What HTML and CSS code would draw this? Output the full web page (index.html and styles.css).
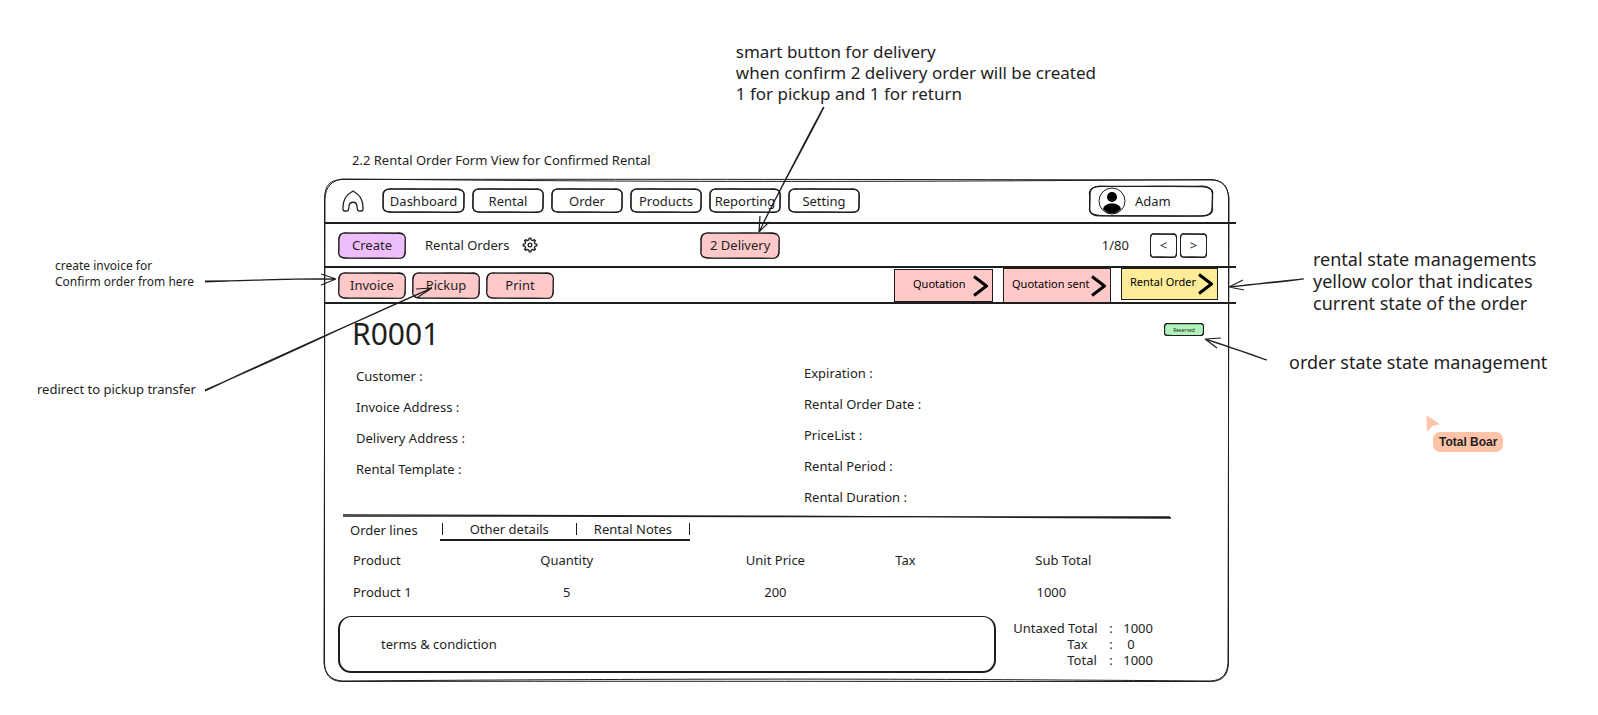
FILE: index.html
```html
<!DOCTYPE html>
<html lang="en">
<head>
<meta charset="utf-8">
<meta name="viewport" content="width=device-width, initial-scale=1">
<title>Rental Order Form View</title>
<link rel="stylesheet" href="styles.css">
</head>
<body>
<svg class="defs" aria-hidden="true">
  <symbol id="rough" viewBox="0 0 72 26" preserveAspectRatio="none">
    <path vector-effect="non-scaling-stroke" d="M7 1.2 C25 .6 48 1.6 65 .8 C69 1 70.8 3 71 6.5 C71.6 11 70.6 16 71.2 20 C71 23.6 69 25 65 25 C46 25.7 25 24.6 7 25.2 C3 25 1.2 23.5 1 20 C.6 15 1.5 11 .8 6.5 C1 2.8 3 1.3 7 1.2Z"/>
    <path class="pass" vector-effect="non-scaling-stroke" d="M7 .8 C28 1.8 46 .6 65 1.4 C68.5 1.6 71.4 3.5 71.3 6.5 C70.7 11 71.4 15 70.8 20 C70.6 23 68.5 25.4 65 25.3 C44 24.7 28 25.6 7 24.8 C3.5 24.6 .8 23 .8 20 C1.4 16 .7 11 1.2 6.5 C1.5 3.5 3.5 1 7 .8Z"/>
  </symbol>
  <symbol id="chevron" viewBox="0 0 16 22"><path d="M2 1.5 14.5 11 2 20.5" fill="none" stroke="#000" stroke-width="3"/></symbol>
</svg>

<main class="canvas">
  <aside class="notes notes-left">
    <p class="note-invoice">create invoice for<br>Confirm order from here</p>
    <p class="note-pickup">redirect to pickup transfer</p>
  </aside>

  <section class="center">
    <p class="note-top">smart button for delivery<br>when confirm 2 delivery order will be created<br>1 for pickup and 1 for return</p>
    <h1 class="caption">2.2 Rental Order Form View for Confirmed Rental</h1>

    <div class="board">
      <svg class="frame" viewBox="0 0 905 503" preserveAspectRatio="none" aria-hidden="true">
        <path d="M18 .5 C250 0 600 .5 887 1 C899 1 904 7 904.5 19 L904.5 484 C904 496 899 502 887 502.5 C600 502.5 250 502 18 502.5 C6 502 1 496 .5 484 L.5 19 C1 6 6 1 18 .5Z"/>
        <path d="M18 0 C250 2 450 4 887 .5 C898 1 904 8 905 19 L904 484 C903 496 898 501 887 502 C600 500 450 499 18 502 C7 501 1 495 0 484 L1 19 C2 8 7 2 18 0"/>
      </svg>

      <header class="row nav-row">
        <svg class="home" viewBox="0 0 22 22" aria-hidden="true"><path d="M3 21 C1 21 .8 20 1 17 C1.5 9 4 5 11 1 C18 5 20.5 9 21 17 C21.2 20 21 21 19 21 C15 21.5 15.5 20 15 16 C14.5 11 7.5 11 7 16 C6.5 20 7 21.5 3 21Z"/></svg>
        <nav class="nav">
          <button class="sketch wide"><svg class="rough"><use href="#rough"/></svg><span>Dashboard</span></button>
          <button class="sketch"><svg class="rough"><use href="#rough"/></svg><span>Rental</span></button>
          <button class="sketch"><svg class="rough"><use href="#rough"/></svg><span>Order</span></button>
          <button class="sketch"><svg class="rough"><use href="#rough"/></svg><span>Products</span></button>
          <button class="sketch"><svg class="rough"><use href="#rough"/></svg><span>Reporting</span></button>
          <button class="sketch"><svg class="rough"><use href="#rough"/></svg><span>Setting</span></button>
        </nav>
        <button class="sketch user"><svg class="rough"><use href="#rough"/></svg>
          <svg class="avatar" viewBox="0 0 28 28" aria-hidden="true"><circle cx="14" cy="14" r="13" fill="#fff" stroke="#1e1e1e"/><circle cx="14" cy="10" r="5"/><path d="M5 22 C6 14.5 22 14.5 23 22 C18 28 10 28 5 22Z"/></svg>
          <span>Adam</span></button>
      </header>

      <div class="row action-row">
        <div class="crumb">
          <button class="sketch action create"><svg class="rough"><use href="#rough"/></svg><span>Create</span></button>
          <span>Rental Orders</span>
          <button class="gear" aria-label="Settings"><svg viewBox="0 0 24 24"><path d="M10.3 4.3 L10.8 1.8 H13.2 L13.7 4.3 L16.2 5.4 L18.4 3.9 L20.1 5.6 L18.6 7.8 L19.7 10.3 L22.2 10.8 V13.2 L19.7 13.7 L18.6 16.2 L20.1 18.4 L18.4 20.1 L16.2 18.6 L13.7 19.7 L13.2 22.2 H10.8 L10.3 19.7 L7.8 18.6 L5.6 20.1 L3.9 18.4 L5.4 16.2 L4.3 13.7 L1.8 13.2 V10.8 L4.3 10.3 L5.4 7.8 L3.9 5.6 L5.6 3.9 L7.8 5.4Z"/><circle cx="12" cy="12" r="2.8"/></svg></button>
        </div>
        <div class="delivery-slot">
          <button class="sketch action pink delivery"><svg class="rough"><use href="#rough"/></svg><span>2 Delivery</span></button>
          <svg class="arrow arrow-delivery" viewBox="0 0 74 130" aria-hidden="true"><path d="M70 2 C50 42 25 85 5 127 M69.500 2 C49 41 25 86 5 127 M5 127 L6 111 M5 127 L15 117"/></svg>
        </div>
        <div class="pager">
          <span>1/80</span>
          <button class="sketch page" aria-label="Previous"><svg class="rough"><use href="#rough"/></svg><span>&lt;</span></button>
          <button class="sketch page" aria-label="Next"><svg class="rough"><use href="#rough"/></svg><span>&gt;</span></button>
        </div>
      </div>

      <div class="row state-row">
        <div class="doc-actions">
          <button class="sketch action pink"><svg class="rough"><use href="#rough"/></svg><span>Invoice</span></button>
          <button class="sketch action pink"><svg class="rough"><use href="#rough"/></svg><span>Pickup</span></button>
          <button class="sketch action pink"><svg class="rough"><use href="#rough"/></svg><span>Print</span></button>
        </div>
        <div class="states">
          <button class="state quotation"><span>Quotation</span><svg class="chevron"><use href="#chevron"/></svg></button>
          <button class="state sent"><span>Quotation sent</span><svg class="chevron"><use href="#chevron"/></svg></button>
          <button class="state current" aria-current="step"><span>Rental Order</span><svg class="chevron"><use href="#chevron"/></svg></button>
        </div>
      </div>

      <div class="form">
        <div class="title-row">
          <h2>R0001</h2>
          <span class="sketch badge"><svg class="rough"><use href="#rough"/></svg><span>Reserved</span></span>
        </div>

        <div class="fields">
          <ul>
            <li>Customer :</li><li>Invoice Address :</li><li>Delivery Address :</li><li>Rental Template :</li>
          </ul>
          <ul>
            <li>Expiration :</li><li>Rental Order Date :</li><li>PriceList :</li><li>Rental Period :</li><li>Rental Duration :</li>
          </ul>
        </div>

        <svg class="divider" viewBox="0 0 828 5" preserveAspectRatio="none" aria-hidden="true"><path d="M0 1 C200 2 600 2 828 4 M0 2 C300 2 600 3 827 3"/></svg>

        <div class="tabs">
          <button class="tab">Order lines</button>
          <div class="tab-rest"><i></i><button class="tab details">Other details</button><i></i><button class="tab extra">Rental Notes</button><i></i></div>
        </div>

        <table class="lines">
          <colgroup><col class="c-product"><col class="c-qty"><col class="c-price"><col class="c-tax"><col class="c-sub"></colgroup>
          <thead><tr><th>Product</th><th>Quantity</th><th>Unit Price</th><th>Tax</th><th>Sub Total</th></tr></thead>
          <tbody><tr><td>Product 1</td><td>5</td><td>200</td><td></td><td>1000</td></tr></tbody>
        </table>

        <div class="bottom">
          <div class="terms">terms &amp; condiction</div>
          <table class="totals">
            <tr><th>Untaxed Total</th><td class="colon">:</td><td>1000</td></tr>
            <tr><th><span>Tax</span></th><td class="colon">:</td><td class="zero">0</td></tr>
            <tr><th><span>Total</span></th><td class="colon">:</td><td>1000</td></tr>
          </table>
        </div>
      </div>

      <svg class="arrow arrow-invoice" viewBox="0 0 136 16" aria-hidden="true"><path d="M2 10 C50 8 90 7 133 7 M2 9 C50 9 90 6 133 7 M133 7 L118 2 M133 7 L118 13"/></svg>
      <svg class="arrow arrow-pickup" viewBox="0 0 232 108" aria-hidden="true"><path d="M2 106 C70 73 160 34 229 3 M2 105 C74 75 160 32 229 3 M229 3 L213 4 M229 3 L215 12"/></svg>
      <svg class="arrow arrow-state" viewBox="0 0 80 16" aria-hidden="true"><path d="M77 3 C50 5 26 9 2 11 M76 3 C50 7 26 8 2 11 M2 11 L16 4 M2 11 L17 14"/></svg>
      <svg class="arrow arrow-badge" viewBox="0 0 68 28" aria-hidden="true"><path d="M65 24 C45 18 25 9 3 3 M64 24 C45 16 25 11 3 3 M3 3 L19 2 M3 3 L15 12"/></svg>
    </div>
  </section>

  <aside class="notes notes-right">
    <p class="note-state">rental state managements<br>yellow color that indicates<br>current state of the order</p>
    <p class="note-order">order state state management</p>
    <div class="cursor">
      <svg viewBox="0 0 14 17" aria-hidden="true"><path d="M1 1 13 9 6 10.5 1.5 16Z"/></svg>
      <span>Total Boar</span>
    </div>
  </aside>
</main>
</body>
</html>
```
FILE: styles.css
```css
* { box-sizing: border-box; }

body {
  margin: 0;
  background: #fff;
  color: #1e1e1e;
  font: 13px/16px Excalifont, Virgil, "Noto Sans", sans-serif;
}

h1, h2, p, ul { margin: 0; padding: 0; font-weight: 400; }
ul { list-style: none; }
button { padding: 0; border: 0; background: none; color: inherit; font: inherit; cursor: pointer; }
.defs { position: absolute; width: 0; height: 0; }

.canvas {
  display: grid;
  grid-template-columns: 324px minmax(860px, 1fr) 369px;
  min-height: 100vh;
  overflow: hidden;
}

/* margin notes */
.notes { white-space: nowrap; }
.notes-left { display: flex; flex-direction: column; gap: 91px; padding: 258px 0 0 55px; }
.note-invoice { font-size: 12px; }
.note-pickup { margin-left: -18px; }
.notes-right { padding: 248px 0 0 60px; }
.note-state { padding-left: 24px; font-size: 18px; line-height: 22px; }
.note-order { padding-top: 36px; font-size: 18px; line-height: 24px; }

.cursor { display: inline-grid; margin: 41px 0 0 137px; }
.cursor svg { width: 14px; height: 17px; fill: #ffc4a8; stroke: #ffc4a8; stroke-linejoin: round; }
.cursor span {
  margin-left: 7px;
  padding: 2px 6px;
  border-radius: 7px;
  background: #ffc4a8;
  font: bold 12px/16px "Liberation Sans", Arial, sans-serif;
}

/* board */
.center { padding-top: 41px; white-space: nowrap; }
.note-top { margin-left: 45.5%; font-size: 17px; line-height: 21px; }
.caption { margin: 48px 0 11px 28px; font-size: 13px; line-height: 16px; }
.board { position: relative; padding-bottom: 9px; }

.frame { position: absolute; inset: 0; width: 100%; height: 100%; overflow: visible; pointer-events: none; }
.frame path { fill: none; stroke: #1e1e1e; stroke-width: 1; vector-effect: non-scaling-stroke; }

.row { display: flex; align-items: center; margin-right: -7px; border-bottom: 2px solid #1e1e1e; position: relative; }
.nav-row { height: 45px; padding: 0 22px 0 18px; }
.action-row { height: 44px; display: grid; grid-template-columns: 42.6% auto 1fr; padding-right: 29px; }
.state-row { height: 36px; padding: 0 18px 0 14px; justify-content: space-between; }

/* rough-edged boxes */
.sketch { position: relative; display: inline-flex; align-items: center; justify-content: center; width: 72px; height: 25px; --fill: transparent; }
.sketch > span { position: relative; }
.rough { position: absolute; inset: 0; width: 100%; height: 100%; overflow: visible; fill: var(--fill); stroke: #1e1e1e; stroke-width: 1.2; }
.rough .pass { fill: none; }

.home { width: 22px; height: 22px; fill: none; stroke: #1e1e1e; stroke-width: 1.3; }
.nav { display: flex; gap: 7px; margin-left: 18px; }
.nav .wide { width: 83px; }
.user { width: 126px; height: 32px; margin-left: auto; justify-content: flex-start; padding-left: 10px; gap: 9px; }
.avatar { position: relative; width: 28px; height: 28px; }

.action { width: 68px; height: 27px; }
.pink { --fill: #ffc9c9; }
.create { --fill: #eebefa; }
.delivery { width: 80px; }
.crumb { display: flex; align-items: center; gap: 19px; padding-left: 14px; }
.gear { width: 16px; height: 16px; margin-left: -6px; }
.gear svg { display: block; width: 16px; height: 16px; fill: none; stroke: #1e1e1e; stroke-width: 2; stroke-linejoin: round; }
.delivery-slot { position: relative; display: flex; }
.pager { display: flex; align-items: center; justify-content: flex-end; gap: 3px; }
.pager > span { margin-right: 18px; }
.page { width: 27px; height: 25px; }

.doc-actions { display: flex; gap: 6px; }
.states { display: flex; gap: 10px; align-self: stretch; }
.state { display: flex; align-items: center; justify-content: space-between; border: 1px solid #1e1e1e; background: #ffc9c9; color: #000; font-size: 11px; padding: 0 4px 0 8px; }
.state span { padding-bottom: 4px; }
.chevron { width: 16px; height: 22px; }
.quotation { width: 99px; height: 33px; align-self: flex-end; padding-left: 18px; }
.sent { width: 108px; height: 35px; }
.current { width: 97px; height: 32px; background: #ffec99; }

/* form */
.form { padding: 0 25px 0 14px; }
.title-row { display: flex; justify-content: space-between; align-items: flex-start; padding: 13px 0 0 14px; }
h2 { font-size: 30px; line-height: 34px; }
.badge { --fill: #b2f2bb; width: 40px; height: 13px; margin-top: 6px; font-size: 5px; line-height: 8px; }

.fields { display: grid; grid-template-columns: 448px 1fr; padding: 14px 0 0 18px; }
.fields li { height: 31px; }
.fields ul:first-child { padding-top: 3px; }

.divider { display: block; width: calc(100% - 38px); height: 5px; margin-left: 5px; margin-top: -6px; overflow: visible; }
.divider path { fill: none; stroke: #1e1e1e; stroke-width: 1.3; vector-effect: non-scaling-stroke; }

.tabs { display: flex; align-items: center; padding-left: 12px; }
.tab-rest { display: flex; align-items: center; height: 22px; margin-left: 22px; padding-left: 2px; border-bottom: 2px solid #1e1e1e; }
.tab-rest i { width: 1px; height: 12px; background: #1e1e1e; }
.details { margin: 0 27px; }
.extra { margin: 0 17px; }

.lines { width: 91.6%; margin: 11px 0 0 15px; border-collapse: collapse; table-layout: fixed; }
.lines th, .lines td { padding: 0 0 16px; font-weight: 400; text-align: center; }
.lines th:first-child, .lines td:first-child { text-align: left; }
.lines th:last-child { padding-left: 8px; }
.lines td:last-child { padding-right: 16px; }
.c-product { width: 8.6%; }
.c-qty { width: 36.7%; }
.c-price { width: 15.9%; }
.c-tax { width: 16.9%; }
.c-sub { width: 21.9%; }

.bottom { display: flex; gap: 17px; align-items: flex-start; }
.terms { flex: 1; height: 57px; padding: 19px 41px; border: 1px solid #1e1e1e; border-width: 1px 2px 2px; border-radius: 13px; }
.totals { border-collapse: collapse; margin: 4px 51px 0 0; }
.totals th, .totals td { padding: 0; font-weight: 400; text-align: left; }
.totals th { width: 96px; }
.totals th span { margin-left: 54px; }
.totals .colon { width: 14px; }
.totals .zero { padding-left: 4px; }

/* arrows */
.arrow { position: absolute; z-index: 3; fill: none; stroke: #1e1e1e; stroke-width: 1.2; pointer-events: none; }
.arrow-delivery { width: 74px; height: 130px; left: 54px; bottom: 24px; }
.arrow-invoice { width: 136px; height: 16px; left: -121px; top: 93px; }
.arrow-pickup { width: 232px; height: 108px; left: -121px; top: 106px; }
.arrow-state { width: 80px; height: 16px; right: -78px; top: 97px; }
.arrow-badge { width: 68px; height: 28px; right: -41px; top: 157px; }
```
